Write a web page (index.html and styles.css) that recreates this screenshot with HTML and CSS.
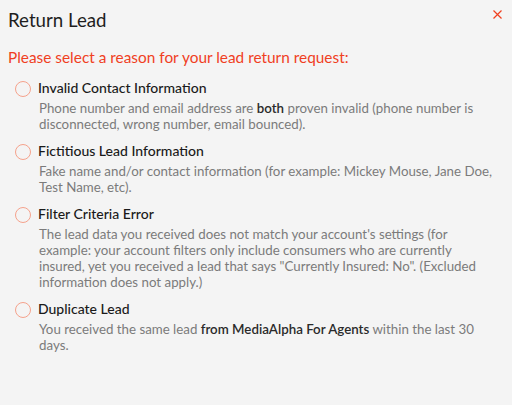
FILE: index.html
```html
<!DOCTYPE html>
<html lang="en">
<head>
<meta charset="utf-8">
<title>Return Lead</title>
<link rel="stylesheet" href="styles.css">
</head>
<body>
<div class="modal">
  <header class="head">
    <h1 class="title">Return Lead</h1>
    <button class="close" aria-label="Close">
      <svg width="9" height="9" viewBox="0 0 9 9"><path d="M0.5 0.5L8.5 8.5M8.5 0.5L0.5 8.5" stroke="#f0401f" stroke-width="1.2" fill="none"/></svg>
    </button>
  </header>
  <h2 class="prompt">Please select a reason for your lead return request:</h2>
  <ul class="options">
    <li class="option">
      <label class="opt-head"><span class="radio"></span><span class="opt-title">Invalid Contact Information</span></label>
      <p class="desc">Phone number and email address are <b>both</b> proven invalid (phone number is disconnected, wrong number, email bounced).</p>
    </li>
    <li class="option">
      <label class="opt-head"><span class="radio"></span><span class="opt-title">Fictitious Lead Information</span></label>
      <p class="desc">Fake name and/or contact information (for example: Mickey Mouse, Jane Doe, Test Name, etc).</p>
    </li>
    <li class="option">
      <label class="opt-head"><span class="radio"></span><span class="opt-title">Filter Criteria Error</span></label>
      <p class="desc">The lead data you received does not match your account's settings (for example: your account filters only include consumers who are currently insured, yet you received a lead that says "Currently Insured: No". (Excluded information does not apply.)</p>
    </li>
    <li class="option">
      <label class="opt-head"><span class="radio"></span><span class="opt-title">Duplicate Lead</span></label>
      <p class="desc">You received the same lead <b>from MediaAlpha For Agents</b> within the last 30 days.</p>
    </li>
  </ul>
</div>
</body>
</html>
```

FILE: styles.css
```css
html, body {
  margin: 0;
  padding: 0;
  background: #f4f4f4;
}
body {
  font-family: Lato, "Noto Sans", sans-serif;
  width: 512px;
  height: 405px;
  overflow: hidden;
}
.modal {
  display: flex;
  flex-direction: column;
}
.head {
  display: flex;
  justify-content: space-between;
  align-items: flex-start;
  padding: 8px 10px 0 8px;
}
.title {
  margin: 0;
  font-size: 18.7px;
  line-height: 24px;
  font-weight: 400;
  color: #1e1e1e;
}
.close {
  border: 0;
  background: none;
  padding: 0;
  margin-top: 2px;
  width: 9px;
  height: 9px;
  display: flex;
}
.prompt {
  margin: 15px 0 0 8px;
  font-size: 15.4px;
  line-height: 20px;
  font-weight: 400;
  color: #f0401f;
}
.options {
  list-style: none;
  margin: 11px 0 0;
  padding: 0;
  display: flex;
  flex-direction: column;
  gap: 9px;
}
.option {
  padding: 0 16px 0 15px;
}
.opt-head {
  display: flex;
  align-items: flex-start;
  gap: 7px;
}
.radio {
  width: 14px;
  height: 14px;
  margin-top: 3px;
  border: 1px solid #f4a28c;
  border-radius: 50%;
  flex: none;
}
.opt-title {
  font-size: 14px;
  line-height: 20px;
  font-weight: 500;
  color: #1a1a1a;
}
.desc {
  margin: 2px 0 0 24px;
  font-size: 13.3px;
  line-height: 16px;
  color: #7b7b7b;
}
.desc b {
  font-weight: 600;
  color: #2a2a2a;
}
```
